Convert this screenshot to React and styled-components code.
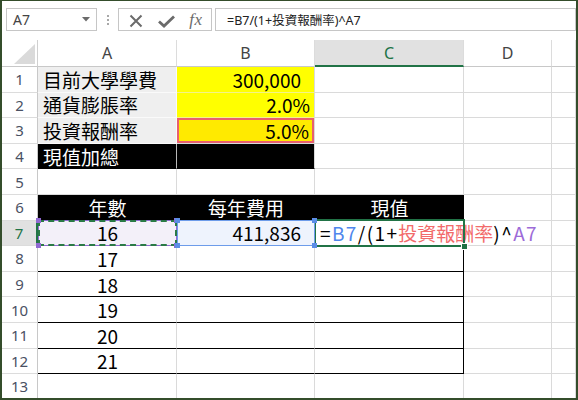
import React from 'react';
import styled, { createGlobalStyle, css } from 'styled-components';

const GlobalStyle = createGlobalStyle`
  html, body { margin: 0; padding: 0; background: #fff; }
  body { width: 578px; height: 400px; overflow: hidden; }
`;

const Frame = styled.div`
  box-sizing: border-box;
  width: 578px;
  height: 400px;
  border: 2px solid #344d2b;
  border-top-width: 1px;
  display: flex;
  flex-direction: column;
  overflow: hidden;
  background: #fff;
`;

const FormulaBar = styled.div`
  flex: 0 0 39px;
  box-sizing: border-box;
  display: flex;
  align-items: flex-start;
  padding: 7px 0 0 4px;
  background: #fff;
`;

const Box = styled.div`
  box-sizing: border-box;
  height: 23px;
  border: 1px solid #c6c6c6;
  background: #fff;
  display: flex;
  align-items: center;
`;

const NameBox = styled(Box)`
  width: 91px;
  padding: 0 6px;
  justify-content: space-between;
  font-family: "Noto Sans", "Liberation Sans", sans-serif;
  font-size: 14px;
  color: #444;
`;

const Dots = styled.div`
  width: 21px;
  height: 23px;
  display: flex;
  flex-direction: column;
  align-items: center;
  justify-content: center;
  gap: 2px;
  & > span {
    width: 2px;
    height: 2px;
    background: #a8a8a8;
  }
`;

const ButtonGroup = styled(Box)`
  width: 94px;
  padding-left: 2px;
`;

const IconSlot = styled.div`
  width: 30px;
  height: 21px;
  display: flex;
  align-items: center;
  justify-content: center;
  padding-top: 3px;
  box-sizing: border-box;
`;

const Fx = styled.span`
  font-family: "Liberation Serif", "DejaVu Serif", serif;
  font-style: italic;
  font-size: 17px;
  color: #6b6b6b;
  letter-spacing: 0.5px;
  margin-top: -3px;
`;

const FormulaInput = styled(Box)`
  flex: 1;
  margin-left: 3px;
  padding-left: 11px;
  font-family: "Noto Sans", "Noto Sans CJK TC", sans-serif;
  font-size: 12.5px;
  color: #222;
  white-space: nowrap;
`;

const Sheet = styled.div`
  flex: 1;
  display: grid;
  grid-template-columns: 36px 139px 138px 149px 88px 1fr;
  grid-template-rows: 27px repeat(13, 25.6px);
  background: #fff;
`;

const Corner = styled.div`
  box-sizing: border-box;
  border-right: 1px solid #d0d0d0;
  border-bottom: 1px solid #c8c8c8;
  display: flex;
  align-items: flex-end;
  justify-content: flex-end;
  padding: 0 2px 2px 0;
`;

const headText = css`
  font-family: "Noto Sans", "Open Sans", sans-serif;
  display: flex;
  align-items: center;
  justify-content: center;
  box-sizing: border-box;
`;

const ColHead = styled.div`
  ${headText}
  font-size: 16px;
  color: ${p => (p.$active ? '#217346' : '#444')};
  background: ${p => (p.$active ? '#e1e1e1' : '#fff')};
  border-right: 1px solid #dcdcdc;
  border-bottom: ${p => (p.$active ? '2px solid #217346' : '1px solid #c8c8c8')};
`;

const RowHead = styled.div`
  ${headText}
  font-size: 15px;
  color: ${p => (p.$active ? '#217346' : '#4a5163')};
  background: ${p => (p.$active ? '#e1e1e1' : '#fff')};
  border-bottom: 1px solid #dcdcdc;
  border-right: ${p => (p.$active ? '2px solid #217346' : '1px solid #c8c8c8')};
`;

const Cell = styled.div`
  box-sizing: border-box;
  position: relative;
  z-index: ${p => p.$z || 'auto'};
  display: flex;
  align-items: center;
  justify-content: ${p =>
    p.$align === 'right' ? 'flex-end' : p.$align === 'center' ? 'center' : 'flex-start'};
  padding: 0 ${p => p.$pr ?? 4}px 0 5px;
  border-right: 1px solid ${p => p.$vline || '#dadada'};
  border-bottom: 1px solid ${p => p.$hline || '#dadada'};
  background: ${p => p.$bg || '#fff'};
  color: ${p => p.$fg || '#000'};
  box-shadow: ${p => p.$ring || 'none'};
  font-family: "Noto Sans CJK TC", "Noto Sans", sans-serif;
  font-size: 19px;
  white-space: nowrap;
`;

const RefBox = styled.div`
  position: absolute;
  top: -1px;
  left: 0;
  right: -1px;
  bottom: -1px;
  border: 1px solid ${p => p.$color};
  pointer-events: none;
`;

const Marquee = styled.div`
  position: absolute;
  top: -1px;
  left: 0;
  right: -1px;
  bottom: -1px;
  border: 2px dashed #2a7a46;
  pointer-events: none;
`;

const Knob = styled.span`
  position: absolute;
  width: 5px;
  height: 5px;
  background: ${p => p.$color};
  ${p => (p.$top ? 'top: -3px;' : 'bottom: -3px;')}
  ${p => (p.$left ? 'left: -2px;' : 'right: -3px;')}
`;

const ActiveBox = styled.div`
  position: absolute;
  top: -2px;
  left: -1px;
  right: -2px;
  bottom: -2px;
  border: 2px solid #217346;
  pointer-events: none;
`;

const FillHandle = styled.span`
  position: absolute;
  right: -5px;
  bottom: -5px;
  width: 5px;
  height: 5px;
  background: #217346;
  border: 1px solid #fff;
`;

const Tok = styled.span`
  color: ${p => p.$c || '#000'};
  letter-spacing: ${p => (p.$cjk ? '0' : '1.4px')};
`;

const COLORS = {
  label: { bg: '#efefef', hline: '#fafafa', vline: '#fafafa' },
  yellow: { bg: '#ffff00', hline: '#f3f38a' },
  ref: { bg: '#ffea00', ring: 'inset 0 0 0 2px #e8606e' },
  dark: { bg: '#000', fg: '#fff', hline: '#000' },
  head: { bg: '#000', fg: '#fff', hline: '#000', vline: '#000' },
};

const Formula = () => (
  <>
    <Tok>=</Tok>
    <Tok $c="#4f86ec">B7</Tok>
    <Tok>/(1+</Tok>
    <Tok $c="#f26b6b" $cjk>投資報酬率</Tok>
    <Tok>)^</Tok>
    <Tok $c="#9d6bd8">A7</Tok>
  </>
);

const Knobs = ({ color }) => (
  <>
    <Knob $color={color} $top $left />
    <Knob $color={color} $top />
    <Knob $color={color} $left />
    <Knob $color={color} />
  </>
);

const tableRow = t => [
  { t, align: 'center', hline: '#000' },
  { hline: '#000' },
  { hline: '#000', vline: '#000' },
];

const rows = [
  [
    { t: '目前大學學費', kind: 'label' },
    { t: '300,000', kind: 'yellow', align: 'right', pr: 13 },
    {},
  ],
  [
    { t: '通貨膨脹率', kind: 'label' },
    { t: '2.0%', kind: 'yellow', align: 'right' },
    {},
  ],
  [
    { t: '投資報酬率', kind: 'label' },
    { t: '5.0%', kind: 'ref', align: 'right', pr: 5 },
    {},
  ],
  [
    { t: '現值加總', kind: 'dark', vline: '#b8b8b8' },
    { kind: 'dark' },
    {},
  ],
  [{}, {}, {}],
  [
    { t: '年數', kind: 'head', align: 'center' },
    { t: '每年費用', kind: 'head', align: 'center' },
    { t: '現值', kind: 'head', align: 'center' },
  ],
  [
    { t: '16', align: 'center', special: 'copy', bg: '#f3f0f9', hline: '#000' },
    { t: '411,836', align: 'right', pr: 13, special: 'prec', bg: '#eef3fd', hline: '#000' },
    { special: 'active', hline: '#000', vline: '#000' },
  ],
  tableRow('17'),
  tableRow('18'),
  tableRow('19'),
  tableRow('20'),
  tableRow('21'),
  [{}, {}, {}],
];

const renderCell = (c, ci) => {
  const k = COLORS[c.kind] || {};
  const props = {
    $bg: c.bg || k.bg,
    $fg: k.fg,
    $hline: c.hline || k.hline,
    $vline: c.vline || k.vline,
    $ring: k.ring,
    $align: c.align,
    $pr: c.pr,
  };
  if (c.special === 'copy') {
    return (
      <Cell key={ci} {...props} $z={3}>
        {c.t}
        <RefBox $color="#9069d2" />
        <Marquee />
        <Knobs color="#9069d2" />
      </Cell>
    );
  }
  if (c.special === 'prec') {
    return (
      <Cell key={ci} {...props} $z={3}>
        {c.t}
        <RefBox $color="#6d9cea" />
        <Knobs color="#5b8de6" />
      </Cell>
    );
  }
  if (c.special === 'active') {
    return (
      <Cell key={ci} {...props} $z={2} $pr={0}>
        <Formula />
        <ActiveBox>
          <FillHandle />
        </ActiveBox>
      </Cell>
    );
  }
  return (
    <Cell key={ci} {...props}>
      {c.t}
    </Cell>
  );
};

const XIcon = () => (
  <svg width="14" height="14" viewBox="0 0 14 14">
    <path d="M1.5 1.5 L12.5 12.5 M12.5 1.5 L1.5 12.5" stroke="#6b6b6b" strokeWidth="2" fill="none" />
  </svg>
);

const CheckIcon = () => (
  <svg width="17" height="13" viewBox="0 0 17 13">
    <path d="M1 6.5 L6 11 L16 1.5" stroke="#6b6b6b" strokeWidth="2.8" fill="none" />
  </svg>
);

const Caret = () => (
  <svg width="8" height="5" viewBox="0 0 8 5">
    <path d="M0 0 L8 0 L4 4.5 Z" fill="#6b6b6b" />
  </svg>
);

export default function App() {
  const cols = ['A', 'B', 'C', 'D', ''];
  return (
    <>
      <GlobalStyle />
      <Frame>
        <FormulaBar>
          <NameBox>
            <span>A7</span>
            <Caret />
          </NameBox>
          <Dots>
            <span />
            <span />
            <span />
          </Dots>
          <ButtonGroup>
            <IconSlot>
              <XIcon />
            </IconSlot>
            <IconSlot>
              <CheckIcon />
            </IconSlot>
            <IconSlot>
              <Fx>fx</Fx>
            </IconSlot>
          </ButtonGroup>
          <FormulaInput>=B7/(1+投資報酬率)^A7</FormulaInput>
        </FormulaBar>
        <Sheet>
          <Corner>
            <svg width="21" height="20" viewBox="0 0 21 20">
              <path d="M21 0 L21 20 L0 20 Z" fill="#dadada" />
            </svg>
          </Corner>
          {cols.map(c => (
            <ColHead key={c || 'e'} $active={c === 'C'}>
              {c}
            </ColHead>
          ))}
          {rows.map((row, r) => (
            <React.Fragment key={r}>
              <RowHead $active={r === 6}>{r + 1}</RowHead>
              {row.map((c, ci) => renderCell(c, ci))}
              <Cell />
              <Cell />
            </React.Fragment>
          ))}
        </Sheet>
      </Frame>
    </>
  );
}
